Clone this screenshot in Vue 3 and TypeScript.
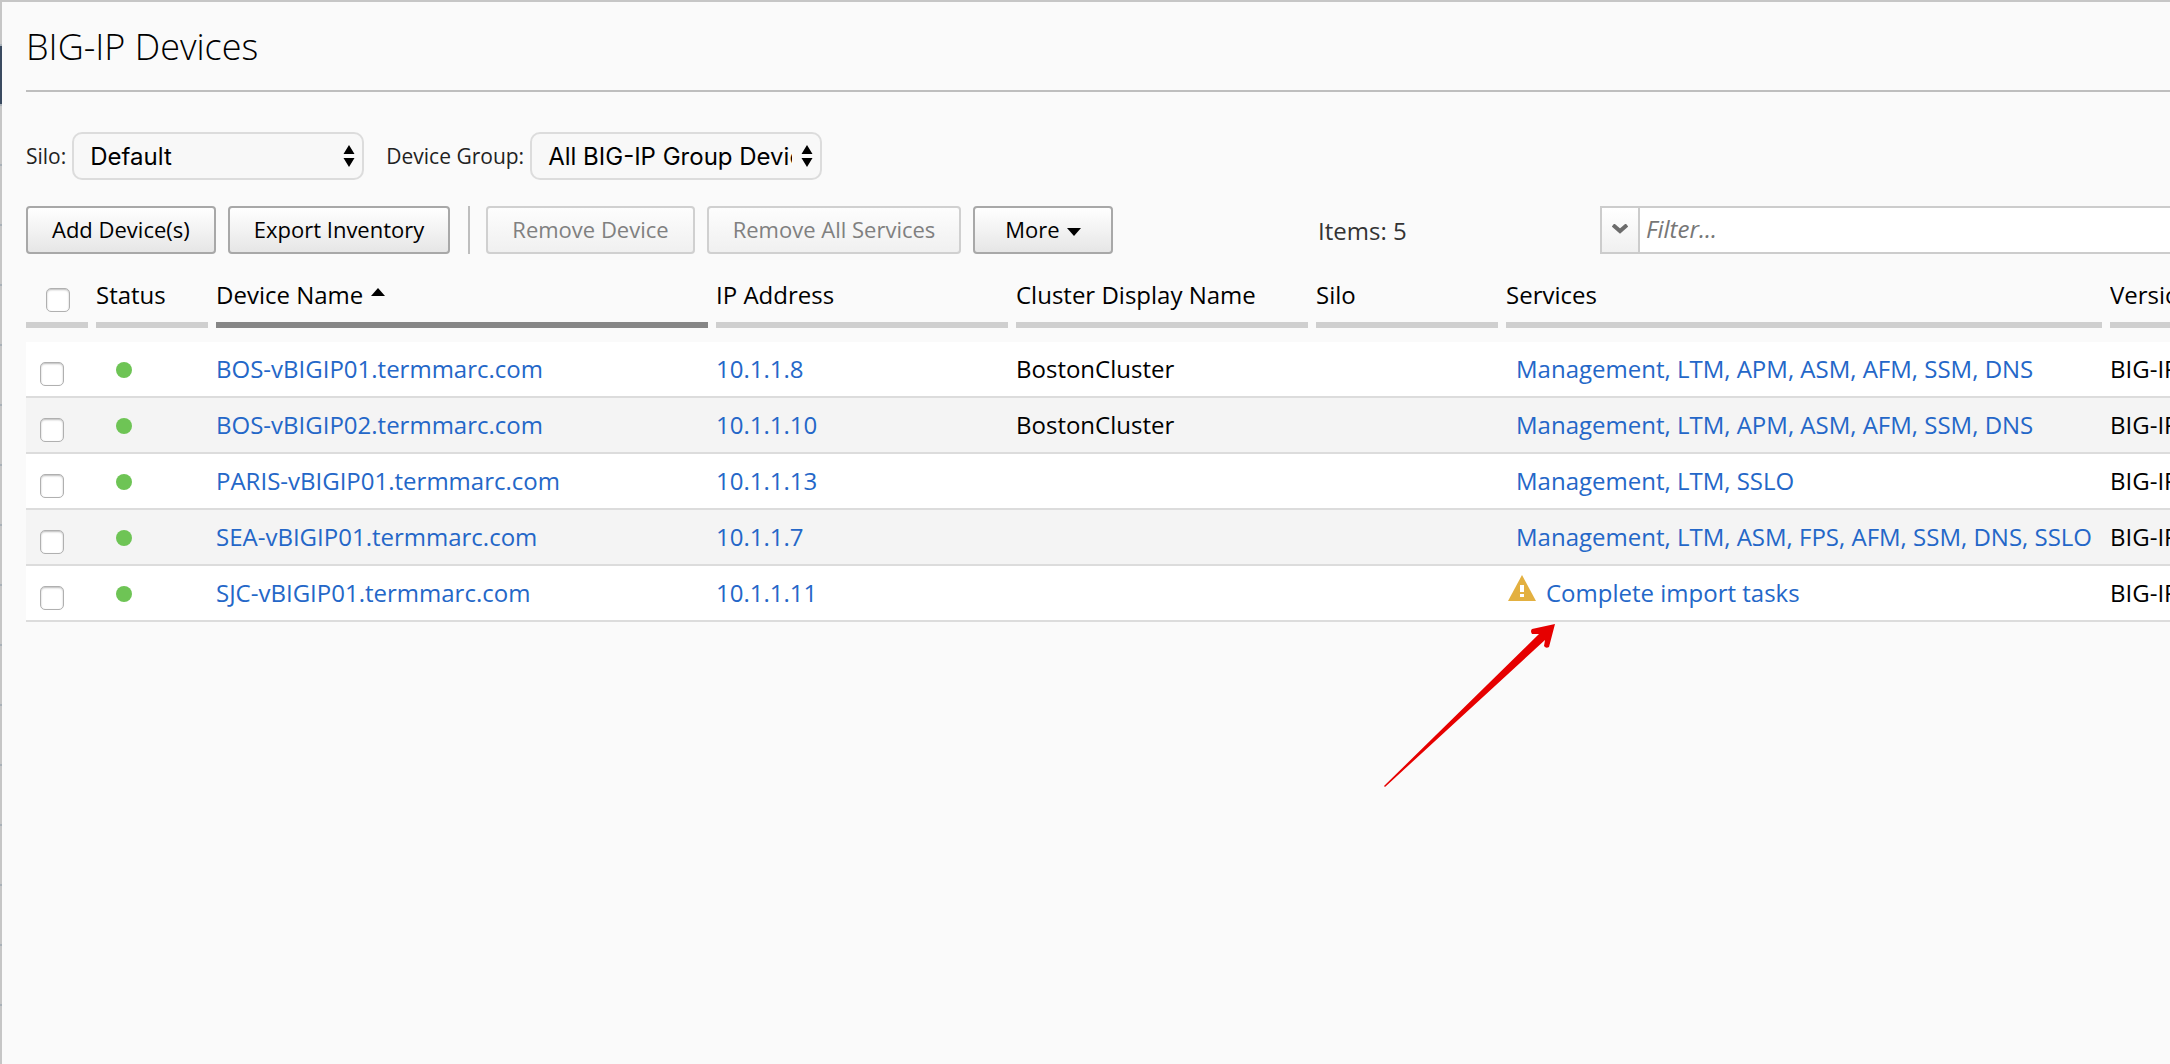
<script setup lang="ts">
import { ref } from 'vue'

interface Device {
  name: string
  ip: string
  cluster: string
  silo: string
  services: string
  importPending: boolean
  version: string
}

const devices: Device[] = [
  { name: 'BOS-vBIGIP01.termmarc.com', ip: '10.1.1.8', cluster: 'BostonCluster', silo: '', services: 'Management, LTM, APM, ASM, AFM, SSM, DNS', importPending: false, version: 'BIG-IP' },
  { name: 'BOS-vBIGIP02.termmarc.com', ip: '10.1.1.10', cluster: 'BostonCluster', silo: '', services: 'Management, LTM, APM, ASM, AFM, SSM, DNS', importPending: false, version: 'BIG-IP' },
  { name: 'PARIS-vBIGIP01.termmarc.com', ip: '10.1.1.13', cluster: '', silo: '', services: 'Management, LTM, SSLO', importPending: false, version: 'BIG-IP' },
  { name: 'SEA-vBIGIP01.termmarc.com', ip: '10.1.1.7', cluster: '', silo: '', services: 'Management, LTM, ASM, FPS, AFM, SSM, DNS, SSLO', importPending: false, version: 'BIG-IP' },
  { name: 'SJC-vBIGIP01.termmarc.com', ip: '10.1.1.11', cluster: '', silo: '', services: 'Complete import tasks', importPending: true, version: 'BIG-IP' },
]

const silo = ref('Default')
const group = ref('All BIG-IP Group Devices')
const filter = ref('')
const selected = ref<string[]>([])

function toggleAll(event: Event) {
  const checked = (event.target as HTMLInputElement).checked
  selected.value = checked ? devices.map((d) => d.name) : []
}
</script>

<template>
  <div class="shell">
    <aside class="rail"><div class="rail-active"></div></aside>
    <main class="panel">
      <header class="title-bar">
        <h1>BIG-IP Devices</h1>
      </header>

      <div class="scopes">
        <label for="silo">Silo:</label>
        <div class="picker">
          <select id="silo" v-model="silo">
            <option>Default</option>
          </select>
          <svg class="picker-arrows" viewBox="0 0 12 22" aria-hidden="true">
            <path d="M6 0 11.500 9H.5zM6 22 .5 13h11z" />
          </svg>
        </div>
        <label for="group" class="group-label">Device Group:</label>
        <div class="picker">
          <select id="group" v-model="group">
            <option>All BIG-IP Group Devices</option>
          </select>
          <svg class="picker-arrows" viewBox="0 0 12 22" aria-hidden="true">
            <path d="M6 0 11.500 9H.5zM6 22 .5 13h11z" />
          </svg>
        </div>
      </div>

      <div class="toolbar">
        <div class="actions">
          <button type="button" class="btn">Add Device(s)</button>
          <button type="button" class="btn">Export Inventory</button>
          <span class="divider"></span>
          <button type="button" class="btn" disabled>Remove Device</button>
          <button type="button" class="btn" disabled>Remove All Services</button>
          <button type="button" class="btn more">
            More
            <svg class="caret" viewBox="0 0 14 8" aria-hidden="true"><path d="M0 0h14L7 8z" /></svg>
          </button>
        </div>
        <div class="count">Items: {{ devices.length }}</div>
        <div class="filter">
          <button type="button" class="filter-menu" aria-label="Filter options">
            <svg viewBox="0 0 16 10" aria-hidden="true"><path d="M1 1 8 7l7-6" /></svg>
          </button>
          <input v-model="filter" type="text" placeholder="Filter..." aria-label="Filter" />
        </div>
      </div>

      <table class="devices">
        <colgroup>
          <col class="c-check" />
          <col class="c-status" />
          <col class="c-name" />
          <col class="c-ip" />
          <col class="c-cluster" />
          <col class="c-silo" />
          <col class="c-services" />
          <col class="c-version" />
        </colgroup>
        <thead>
          <tr>
            <th class="check"><div class="head"><input type="checkbox" aria-label="Select all devices" @change="toggleAll" /></div></th>
            <th><div class="head">Status</div></th>
            <th aria-sort="ascending">
              <div class="head sorted">
                Device Name
                <svg class="caret" viewBox="0 0 14 8" aria-hidden="true"><path d="M0 8h14L7 0z" /></svg>
              </div>
            </th>
            <th><div class="head">IP Address</div></th>
            <th><div class="head">Cluster Display Name</div></th>
            <th><div class="head">Silo</div></th>
            <th><div class="head">Services</div></th>
            <th><div class="head last">Version</div></th>
          </tr>
        </thead>
        <tbody>
          <tr v-for="d in devices" :key="d.name">
            <td class="check"><input v-model="selected" type="checkbox" :value="d.name" :aria-label="d.name" /></td>
            <td><span class="dot" role="img" aria-label="Available"></span></td>
            <td><a href="#">{{ d.name }}</a></td>
            <td><a href="#">{{ d.ip }}</a></td>
            <td>{{ d.cluster }}</td>
            <td>{{ d.silo }}</td>
            <td class="services">
              <div v-if="d.importPending" class="pending">
                <svg class="warning" viewBox="0 0 28 26" aria-hidden="true">
                  <path d="M14 0 28 26H0z" fill="#e3b040" />
                  <path d="M12 10h4v7h-4zM12 19h4v3h-4z" fill="#fff" />
                </svg>
                <a href="#">{{ d.services }}</a>
                <svg class="pointer" viewBox="0 0 172 166" aria-hidden="true">
                  <path d="M171 1 148 6Q146 8 148 11L155 11 0 163 1 164 161 17 160 23Q162 26 165 24z" fill="#e60000" />
                </svg>
              </div>
              <a v-else href="#" class="service-list">{{ d.services }}</a>
            </td>
            <td>{{ d.version }}</td>
          </tr>
        </tbody>
      </table>
    </main>
  </div>
</template>

<style>
body {
  background: #fafafa;
}
</style>

<style scoped>
* {
  box-sizing: border-box;
}

.shell {
  display: flex;
  min-height: 100vh;
  overflow: hidden;
  font-family: "Open Sans", sans-serif;
  font-size: 24px;
  line-height: 32px;
  color: #000;
  background: #fafafa;
}

.rail {
  flex: none;
  width: 2px;
  padding-top: 46px;
  background: repeating-linear-gradient(#c6c6c6 0 44px, #a9b1b8 44px 46px, #c6c6c6 46px 60px);
}

.rail-active {
  height: 58px;
  background: #3a4a60;
}

.panel {
  flex: 1;
  min-width: 0;
  padding-left: 24px;
  border-top: 2px solid #c6c6c6;
}

.title-bar {
  padding: 21px 0 19px;
  border-bottom: 2px solid #bebebe;
}

h1 {
  margin: 0;
  font-size: 36px;
  font-weight: 300;
  line-height: 48px;
}

.scopes {
  display: flex;
  align-items: center;
  gap: 6px;
  margin-top: 40px;
  font-size: 21px;
  color: #222;
}

.group-label {
  margin-left: 16px;
}

.picker {
  position: relative;
  width: 292px;
}

select {
  display: block;
  width: 100%;
  height: 48px;
  padding: 0 28px 0 16px;
  font-family: Inter, sans-serif;
  font-size: 24px;
  color: #000;
  appearance: none;
  background: #f8f8f8;
  border: 2px solid #dcdcdc;
  border-radius: 10px;
}

.picker-arrows {
  position: absolute;
  top: 13px;
  right: 9px;
  width: 12px;
  height: 22px;
  pointer-events: none;
}

.toolbar {
  display: grid;
  grid-template-columns: 1292fr 282fr 570fr;
  align-items: center;
  margin-top: 26px;
}

.actions {
  display: flex;
  gap: 12px;
}

.btn {
  height: 48px;
  padding: 0 24px 2px;
  font: inherit;
  font-size: 22px;
  color: #000;
  white-space: nowrap;
  background: linear-gradient(#fff, #e6e6e6);
  border: 2px solid #a8a8a8;
  border-radius: 4px;
}

.btn:disabled {
  color: #808080;
  background: linear-gradient(#fdfdfd, #f0f0f0);
  border-color: #d0d0d0;
}

.btn.more {
  padding: 0 30px 2px;
}

.divider {
  width: 2px;
  height: 48px;
  margin: 0 4px 0 6px;
  background: #bebebe;
}

.caret {
  width: 14px;
  height: 8px;
  margin-left: 2px;
}

.btn .caret {
  margin-bottom: 2px;
}

.count {
  padding-top: 2px;
  color: #333;
}

.filter {
  display: flex;
  height: 48px;
  background: #fff;
  border: 2px solid #ccc;
  border-right: 0;
}

.filter-menu {
  display: flex;
  align-items: center;
  justify-content: center;
  width: 38px;
  padding: 0 0 2px;
  background: linear-gradient(#fff, #f0f0f0);
  border: 0;
  border-right: 2px solid #ccc;
}

.filter-menu svg {
  width: 16px;
  height: 10px;
  fill: none;
  stroke: #6c6c6c;
  stroke-width: 4;
}

.filter input {
  flex: 1;
  min-width: 0;
  padding: 0 6px 2px;
  font: inherit;
  background: none;
  border: 0;
}

.filter input::placeholder {
  font-style: italic;
  color: #777;
}

.devices {
  width: 100%;
  margin-top: 24px;
  table-layout: fixed;
  border-collapse: separate;
  border-spacing: 0;
}

.c-check { width: 70px; }
.c-status { width: 120px; }
.c-name { width: 500px; }
.c-ip { width: 300px; }
.c-cluster { width: 300px; }
.c-silo { width: 190px; }
.c-version { width: 60px; }

th {
  padding: 0 0 14px;
  font-weight: 400;
  line-height: 34px;
  text-align: left;
}

.head {
  height: 50px;
  margin-right: 8px;
  overflow: hidden;
  white-space: nowrap;
  border-bottom: 6px solid #cfcfcf;
}

.head.sorted {
  border-color: #868686;
}

.head.sorted .caret {
  margin-bottom: 8px;
}

.head.last {
  margin-right: 0;
}

td {
  height: 56px;
  padding: 0;
  overflow: hidden;
  white-space: nowrap;
  background: #fff;
  border-bottom: 2px solid #dcdcdc;
}

tbody tr:nth-child(even) td {
  background: #f4f4f4;
}

a {
  color: #2467c8;
  text-decoration: none;
}

input[type="checkbox"] {
  display: block;
  width: 24px;
  height: 24px;
  margin: 0;
  appearance: none;
  background: #fff;
  border: 1px solid #b0b0b0;
  border-radius: 5px;
  box-shadow: inset 0 1px 2px #bbb;
}

input[type="checkbox"]:checked {
  background: #2467c8;
}

th.check input {
  margin: 10px 0 0 20px;
}

td.check input {
  margin: 10px 0 0 14px;
}

.dot {
  display: block;
  width: 16px;
  height: 16px;
  margin: 2px 0 0 20px;
  background: #6ec455;
  border-radius: 50%;
}

td.services {
  overflow: visible;
}

.service-list {
  margin-left: 10px;
}

.pending {
  position: relative;
  display: flex;
  gap: 10px;
  margin-left: 2px;
}

.warning {
  width: 28px;
  height: 26px;
  margin-top: -2px;
}

.pointer {
  position: absolute;
  top: 46px;
  left: -124px;
  width: 172px;
  height: 166px;
  pointer-events: none;
}
</style>
